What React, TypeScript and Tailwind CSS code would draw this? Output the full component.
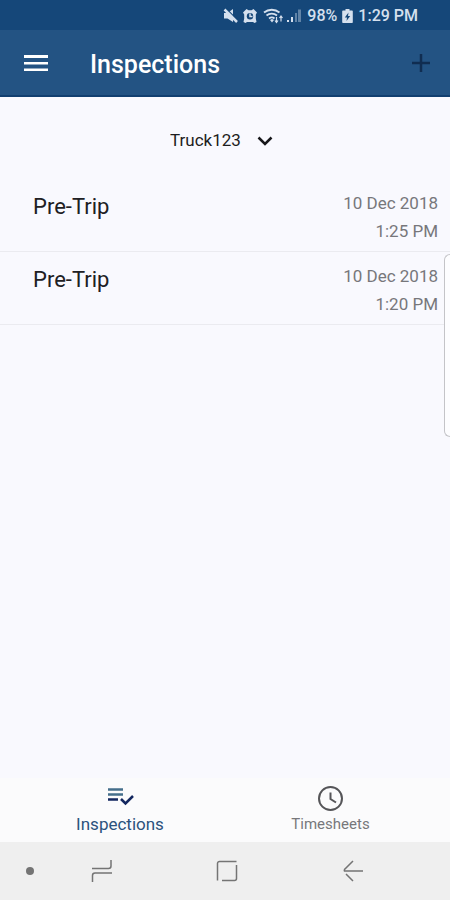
import { useState } from 'react';

const inspections = [
  { id: 1, name: 'Pre-Trip', date: '10 Dec 2018', time: '1:25 PM' },
  { id: 2, name: 'Pre-Trip', date: '10 Dec 2018', time: '1:20 PM' },
];

const StatusBar = () => {
  return (
    <div className="flex h-[30px] items-center justify-end bg-[#154779] pr-8 pt-[2px] text-base font-medium text-[#d5e0ee]">
      {/* Muted */}
      <svg className="mr-1" width="16" height="16" viewBox="0 0 16 16" fill="currentColor">
        <path d="M2 5h3.500L11 1v13L5.500 10.500H2z" />
        <path d="M4.500 1l11 11" stroke="#154779" strokeWidth="1.200" />
        <path d="M2.500 1.500l12.500 12.500" stroke="currentColor" strokeWidth="2.500" />
      </svg>
      {/* Alarm */}
      <svg className="mr-[5px]" width="16" height="16" viewBox="0 0 16 16" fill="currentColor">
        <path d="M1 4.500L4.500 1l2 1.200h3l2-1.200L15 4.500l-1.200 2v4l.7 3.500-2 1-1.500-1H5l-1.500 1-2-1 .7-3.500v-4z" />
        <circle cx="8" cy="8.200" r="3.200" fill="#154779" />
        <path d="M8 5.500v3h2.500" stroke="currentColor" strokeWidth="1.500" fill="none" />
      </svg>
      {/* Wifi */}
      <svg className="mr-[2px]" width="21" height="16" viewBox="0 0 21 16" fill="none" stroke="currentColor" strokeWidth="1.800">
        <path d="M1 4.500C5.500.8 12 .8 16.500 4.500M3.500 7.500c3-2.500 7.500-2.500 10.500 0M6 10.500c1.800-1.300 4-1.300 5.500 0" />
        <path d="M7 12l2-1 2 1-2 2.500z" fill="currentColor" stroke="none" />
        <path d="M13.500 14.500V9M12 12.500l1.500 2 1.500-2M18 8v5.500M16.500 10L18 8l1.500 2" strokeWidth="1.200" />
      </svg>
      {/* Signal */}
      <svg className="mr-[5px]" width="16" height="16" viewBox="0 0 16 16" fill="currentColor">
        <path d="M1 12h2v2H1zM5 9h2v5H5z" />
        <path d="M9 5h2v9H9zM12 1.500h3V14h-3z" opacity=".4" />
      </svg>
      <span>98%</span>
      {/* Battery */}
      <svg className="mx-[5px]" width="11" height="16" viewBox="0 0 11 16">
        <path d="M3.500 1h4v1.500H10a.8.8 0 0 1 .8.800v11a.8.8 0 0 1-.8.800H1a.8.8 0 0 1-.8-.800v-11A.8.8 0 0 1 1 2.500h2.500z" fill="currentColor" />
        <path d="M6.500 4.500L2.800 9.500h2.200L4.500 13l3.700-5H6z" fill="#154779" />
      </svg>
      <span>1:29 PM</span>
    </div>
  );
};

const Header = () => {
  return (
    <header className="flex h-[67px] items-center border-b-2 border-[#123f70] bg-[#235383] pl-6 pr-5 text-white">
      <button type="button" aria-label="Open menu">
        <svg width="24" height="18" viewBox="0 0 24 18" fill="currentColor">
          <path d="M0 1h24v3H0zM0 8h24v2.500H0zM0 14.500h24v2.500H0z" />
        </svg>
      </button>
      <h1 className="ml-[42px] flex-1 pt-1 text-[25px] font-medium leading-8">Inspections</h1>
      <button type="button" aria-label="Add inspection" className="text-[#102d51]">
        <svg width="18" height="18" viewBox="0 0 18 18" fill="none" stroke="currentColor" strokeWidth="2.500">
          <path d="M9 0v18M0 9h18" />
        </svg>
      </button>
    </header>
  );
};

const TruckPicker = () => {
  return (
    <div className="flex h-[82px] items-center justify-center pr-[7px] pt-1">
      <div className="relative">
        <select
          aria-label="Truck"
          className="cursor-pointer appearance-none bg-transparent pr-8 text-[17px] leading-6 text-[#1d1d20]"
        >
          <option>Truck123</option>
        </select>
        <svg
          className="pointer-events-none absolute right-0 top-2"
          width="16"
          height="10"
          viewBox="0 0 16 10"
          fill="none"
          stroke="#17171a"
          strokeWidth="2.500"
        >
          <path d="M1.500 1.500L8 8l6.500-6.500" />
        </svg>
      </div>
    </div>
  );
};

const BottomTabs = () => {
  const [tab, setTab] = useState('inspections');

  return (
    <nav className="grid h-16 grid-cols-[240fr_181fr_29fr] bg-[#fbfbfc]">
      <button
        type="button"
        aria-pressed={tab === 'inspections'}
        onClick={() => setTab('inspections')}
        className="flex flex-col items-center pt-2 text-[17px] leading-6 text-[#2b527c]"
      >
        <svg className="mb-[2px]" width="28" height="24" viewBox="0 0 28 24" fill="none" strokeWidth="2.500">
          <path d="M2 3.500h15M2 8.500h15" stroke="#456f8b" />
          <path d="M2 13.500h10M15 13l4.500 4.500L27 10" stroke="#13275f" />
        </svg>
        Inspections
      </button>
      <button
        type="button"
        aria-pressed={tab === 'timesheets'}
        onClick={() => setTab('timesheets')}
        className="flex flex-col items-center pt-2 text-[15px] leading-6 text-[#77777b]"
      >
        <svg width="26" height="26" viewBox="0 0 26 26" fill="none" stroke="#555558" strokeWidth="2">
          <circle cx="12.500" cy="12.500" r="11.500" />
          <path d="M12.500 6.500v6.500l5.500 3.500" />
        </svg>
        Timesheets
      </button>
    </nav>
  );
};

const SystemNav = () => {
  return (
    <div className="grid h-[58px] grid-cols-[60fr_83fr_168fr_84fr_55fr] items-center justify-items-center bg-[#efefef] text-[#747474]">
      <span className="h-2 w-2 rounded-full bg-[#747474]"></span>
      <button type="button" aria-label="Recent apps">
        <svg width="22" height="22" viewBox="0 0 22 22" fill="none" stroke="currentColor" strokeWidth="1.500">
          <path d="M1 8.500h16.500a2.500 2.500 0 0 0 2.500-2.500V0M21 13H4a2.500 2.500 0 0 0-2.500 2.500V22" />
        </svg>
      </button>
      <button type="button" aria-label="Home">
        <svg width="22" height="22" viewBox="0 0 22 22" fill="none" stroke="currentColor" strokeWidth="1.500">
          <path d="M1.500 20.500v-17a2 2 0 0 1 2-2h17M20.500 5v13.500a2 2 0 0 1-2 2H6" />
        </svg>
      </button>
      <button type="button" aria-label="Back">
        <svg width="20" height="22" viewBox="0 0 20 22" fill="none" stroke="currentColor" strokeWidth="1.500">
          <path d="M10 1L1.500 9.500a1.500 1.500 0 0 0 0 1.500H20M3 14l7 7" />
        </svg>
      </button>
    </div>
  );
};

const App = () => {
  return (
    <div className="relative flex min-h-screen flex-col bg-[#f9f9fe] font-[Roboto,sans-serif]">
      <StatusBar />
      <Header />

      <main className="flex-1">
        <TruckPicker />
        <ul>
          {inspections.map((item) => (
            <li
              key={item.id}
              className="flex justify-between border-b border-[#ebebf0] pb-[6px] pl-[33px] pr-3 pt-[10px] leading-7"
            >
              <span className="pt-1 text-[22px] text-[#202023]">{item.name}</span>
              <span className="text-right text-[17px] text-[#77777b]">
                {item.date}
                <br />
                {item.time}
              </span>
            </li>
          ))}
        </ul>
      </main>

      {/* Edge panel handle */}
      <div className="absolute right-0 top-[254px] h-[183px] w-[6px] rounded-l-lg border border-r-0 border-[#c4c4c8] bg-[#fdfdff]"></div>

      <BottomTabs />
      <SystemNav />
    </div>
  );
};

export default App;
